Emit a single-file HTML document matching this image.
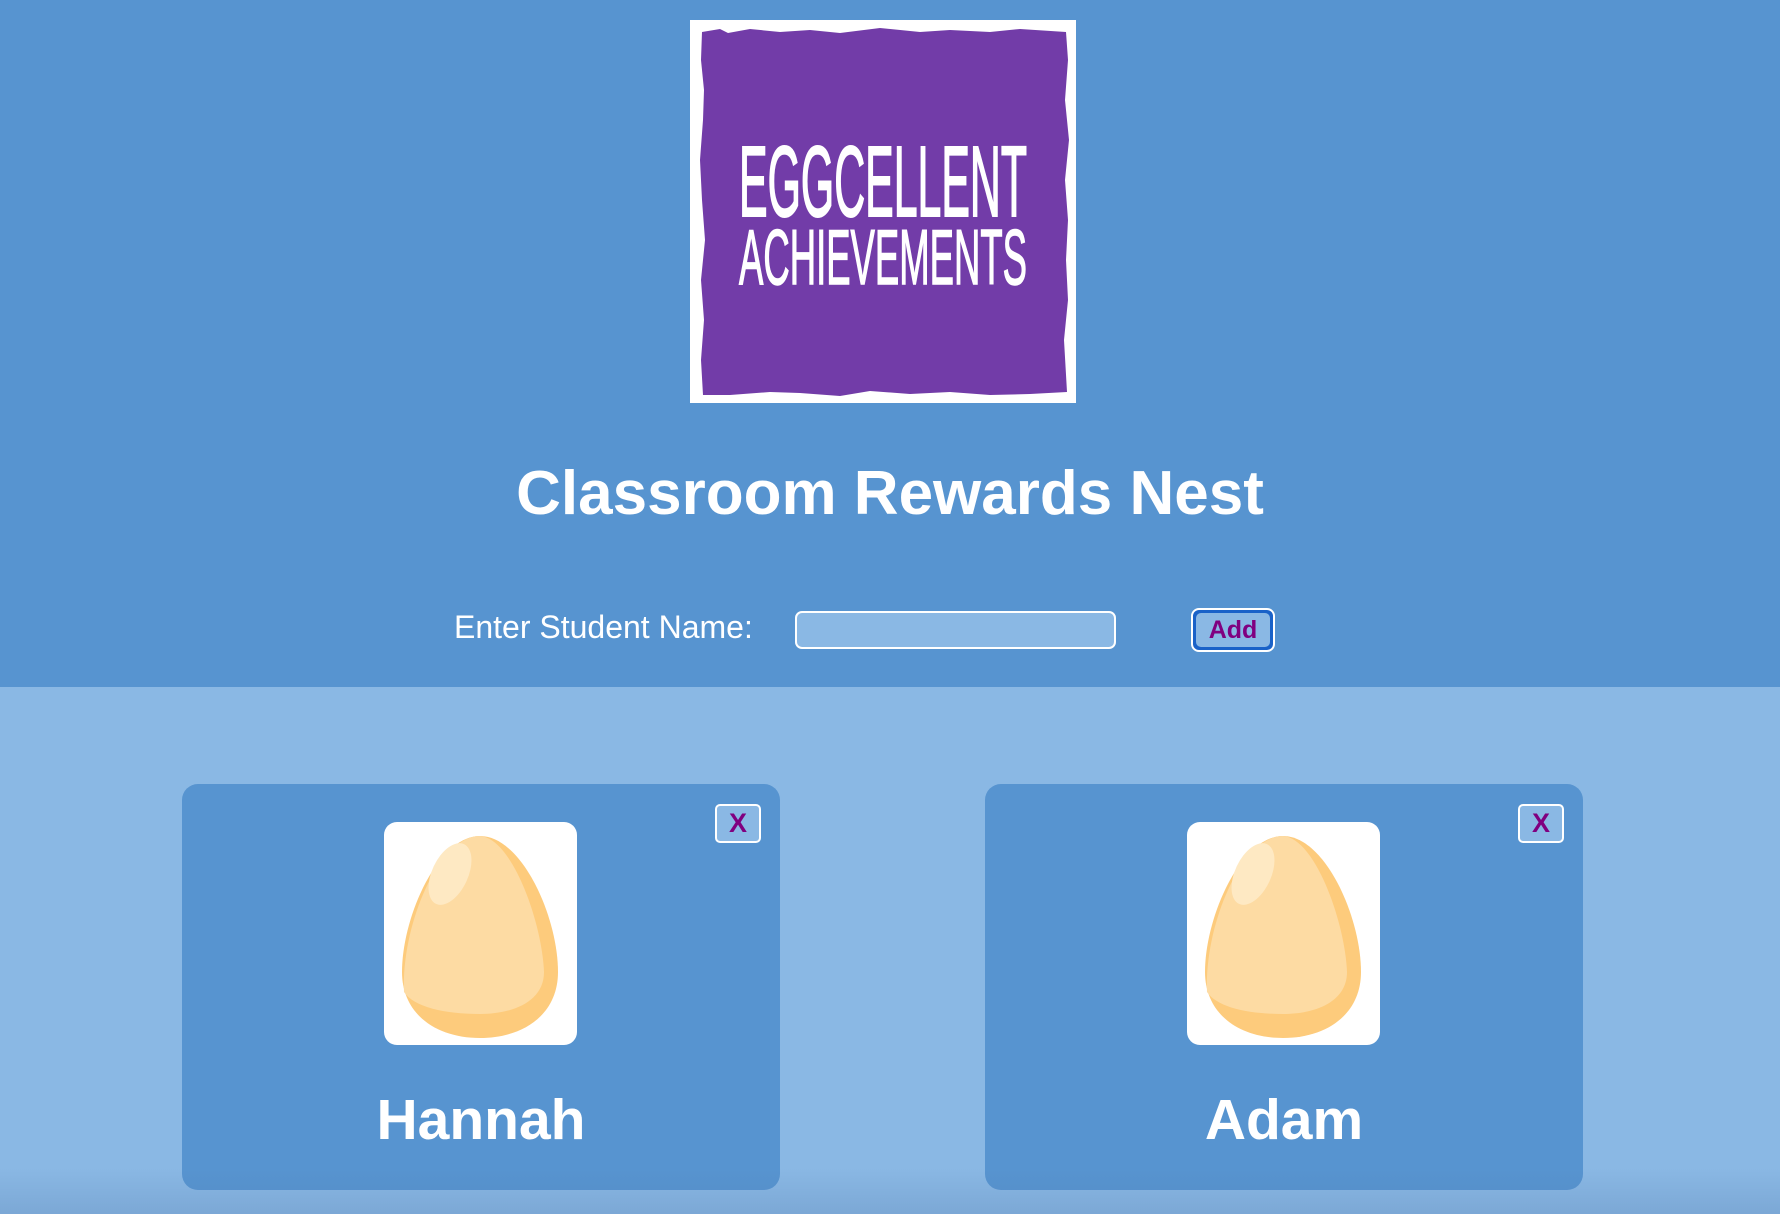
<!DOCTYPE html>
<html><head><meta charset="utf-8"><style>
*{margin:0;padding:0;box-sizing:border-box}
body{width:1780px;height:1214px;overflow:hidden;background:#8ab8e4;font-family:"Liberation Sans",sans-serif;position:relative}
.top{position:absolute;left:0;top:0;width:1780px;height:687px;background:#5794d0}
.logo{position:absolute;left:690px;top:20px;width:386px;height:383px;background:#fff}
.title{position:absolute;left:0;width:1780px;top:454px;text-align:center;color:#fff;font-weight:bold;font-size:62px;line-height:80px}
.label{position:absolute;left:454px;top:608px;color:#fff;font-size:32px;line-height:38px}
.input{position:absolute;left:795px;top:611px;width:321px;height:38px;background:#8ab8e4;border:2px solid #fff;border-radius:7px}
.add{position:absolute;left:1191px;top:608px;width:84px;height:44px;border:2px solid #fff;border-radius:8px;background:#1a62c8;padding:3px}
.add div{width:100%;height:100%;background:#8ab8e4;border-radius:5px;color:#800080;font-weight:bold;font-size:25px;text-align:center;line-height:34px}
.card{position:absolute;top:784px;width:598px;height:406px;background:#5794d0;border-radius:16px}
.egg{position:absolute;left:202px;top:38px;width:193px;height:223px;background:#fff;border-radius:13px}
.x{position:absolute;left:533px;top:20px;width:46px;height:39px;background:#8ab8e4;border:2px solid #fff;border-radius:5px;color:#800080;font-weight:bold;font-size:27px;text-align:center;line-height:35px}
.name{position:absolute;left:0;width:598px;top:300px;text-align:center;color:#fff;font-weight:bold;font-size:57px;line-height:72px}
.shade{position:absolute;left:0;top:1168px;width:1780px;height:46px;background:linear-gradient(rgba(80,120,170,0),rgba(80,120,170,.25))}
</style></head><body>
<div class="top"></div>
<div class="logo">
<svg width="386" height="383" viewBox="0 0 386 383">
<path d="M12,12 L30,9 L38,13 L60,9 L90,12 L120,10 L150,13 L190,8 L230,12 L260,10 L300,12 L330,9 L376,12 L378,40 L375,80 L379,120 L375,160 L378,200 L376,240 L378,280 L374,320 L377,372 L340,374 L300,375 L260,372 L220,374 L180,371 L150,376 L110,373 L80,372 L40,375 L13,375 L11,340 L14,300 L11,260 L15,220 L12,180 L10,140 L13,100 L14,70 L11,40 Z" fill="#723ca8"/>
<text x="49" y="196" fill="#fff" stroke="#fff" stroke-width="2" font-family="Liberation Sans Narrow, Liberation Sans, sans-serif" font-size="100" textLength="288" lengthAdjust="spacingAndGlyphs">EGGCELLENT</text>
<text x="49" y="264" fill="#fff" stroke="#fff" stroke-width="1.5" font-family="Liberation Sans Narrow, Liberation Sans, sans-serif" font-size="78" textLength="288" lengthAdjust="spacingAndGlyphs">ACHIEVEMENTS</text>
</svg>
</div>
<div class="title">Classroom Rewards Nest</div>
<div class="label">Enter Student Name:</div>
<div class="input"></div>
<div class="add"><div>Add</div></div>

<div class="card" style="left:182px">
<div class="egg"><svg width="193" height="223" viewBox="0 0 193 223">
<path d="M96,14 C138,14 174,95 174,150 C174,192 140,216 96,216 C52,216 18,192 18,150 C18,95 54,14 96,14 Z" fill="#fdcb7c"/>
<path d="M96,14 C128,16 158,100 160,150 C160,180 128,192 96,192 C60,192 30,185 20,170 C17,105 54,14 96,14 Z" fill="#fddba3"/>
<ellipse cx="66" cy="52" rx="18" ry="33" transform="rotate(25 66 52)" fill="#fee9c3"/>
</svg></div>
<div class="x">X</div>
<div class="name">Hannah</div>
</div>

<div class="card" style="left:985px">
<div class="egg"><svg width="193" height="223" viewBox="0 0 193 223">
<path d="M96,14 C138,14 174,95 174,150 C174,192 140,216 96,216 C52,216 18,192 18,150 C18,95 54,14 96,14 Z" fill="#fdcb7c"/>
<path d="M96,14 C128,16 158,100 160,150 C160,180 128,192 96,192 C60,192 30,185 20,170 C17,105 54,14 96,14 Z" fill="#fddba3"/>
<ellipse cx="66" cy="52" rx="18" ry="33" transform="rotate(25 66 52)" fill="#fee9c3"/>
</svg></div>
<div class="x">X</div>
<div class="name">Adam</div>
</div>
<div class="shade"></div>
</body></html>
